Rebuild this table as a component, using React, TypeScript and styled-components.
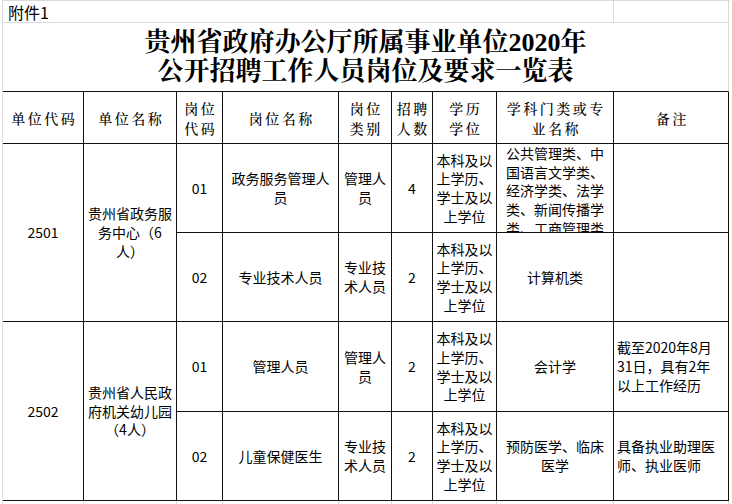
import React from 'react';
import styled, { createGlobalStyle } from 'styled-components';

const GRID = '#dadada';
const INK = '#111';

const GlobalStyle = createGlobalStyle`
  html, body {
    margin: 0;
    padding: 0;
    background: #fff;
  }
  body {
    font-family: "Noto Sans CJK SC", "Noto Sans", sans-serif;
    color: #000;
  }
`;

const Sheet = styled.div`
  margin-left: 2px;
  width: 727px;
  display: grid;
  grid-template-columns: 81px 93px 46px 116px 53px 41px 64px 117px 115px;
  grid-template-rows: 22px 69px 52px 89px 89px 90px 89px 8px;
  border-top: 1px solid ${GRID};
  border-left: 1px solid ${GRID};
  overflow: hidden;
`;

type Place = {
  $col: number;
  $row: number;
  $span?: number;
  $rows?: number;
  $edge?: string;
  $floor?: string;
};

const Cell = styled.div<Place>`
  grid-column: ${(p) => p.$col} / span ${(p) => p.$span ?? 1};
  grid-row: ${(p) => p.$row} / span ${(p) => p.$rows ?? 1};
  box-sizing: border-box;
  border-right: 1px solid ${(p) => p.$edge ?? INK};
  border-bottom: 1px solid ${(p) => p.$floor ?? INK};
  display: flex;
  align-items: center;
  justify-content: center;
  text-align: center;
  white-space: pre-line;
  overflow: hidden;
  min-width: 0;
`;

const Caption = styled(Cell)`
  justify-content: flex-start;
  padding-left: 5px;
  font-size: 16px;
  line-height: 20px;
`;

const TitleCell = styled(Cell)`
  flex-direction: column;
  font-family: "Liberation Serif", "Noto Serif CJK SC", "Noto Sans CJK SC", serif;
  font-weight: 700;
  font-size: 26px;
  line-height: 29px;
  padding-bottom: 1px;
`;

const TitleLine = styled.div`
  white-space: nowrap;
`;

const HeadCell = styled(Cell)`
  font-family: "Noto Serif CJK SC", "Noto Sans CJK SC", serif;
  font-size: 14px;
  font-weight: 500;
  line-height: 20px;
  letter-spacing: 2.5px;
  padding-left: 2.5px;
`;

const BodyCell = styled(Cell)`
  font-size: 14px;
  line-height: 18.7px;
  padding: 0 2px;
`;

const SubjectCell = styled(BodyCell)`
  align-items: flex-start;
`;

const NoteCell = styled(BodyCell)`
  justify-content: flex-start;
  text-align: left;
  padding: 0 3px;
`;

const Filler = styled(Cell)`
  border-bottom: none;
`;

const headers = [
  '单位代码',
  '单位名称',
  '岗位\n代码',
  '岗位名称',
  '岗位\n类别',
  '招聘\n人数',
  '学历\n学位',
  '学科门类或专\n业名称',
  '备注',
];

const degree = '本科及以\n上学历、\n学士及以\n上学位';

type Post = {
  code: string;
  name: string;
  kind: string;
  count: string;
  subject: string;
  clipTop?: boolean;
  note?: string;
};

type Unit = {
  code: string;
  name: string;
  posts: Post[];
};

const units: Unit[] = [
  {
    code: '2501',
    name: '贵州省政务服\n务中心（6\n人）',
    posts: [
      {
        code: '01',
        name: '政务服务管理人\n员',
        kind: '管理人\n员',
        count: '4',
        subject: '公共管理类、中\n国语言文学类、\n经济学类、法学\n类、新闻传播学\n类、工商管理类',
        clipTop: true,
      },
      {
        code: '02',
        name: '专业技术人员',
        kind: '专业技\n术人员',
        count: '2',
        subject: '计算机类',
      },
    ],
  },
  {
    code: '2502',
    name: '贵州省人民政\n府机关幼儿园\n（4人）',
    posts: [
      {
        code: '01',
        name: '管理人员',
        kind: '管理人\n员',
        count: '2',
        subject: '会计学',
        note: '截至2020年8月\n31日，具有2年\n以上工作经历',
      },
      {
        code: '02',
        name: '儿童保健医生',
        kind: '专业技\n术人员',
        count: '2',
        subject: '预防医学、临床\n医学',
        note: '具备执业助理医\n师、执业医师',
      },
    ],
  },
];

const App: React.FC = () => {
  let row = 4;

  return (
    <>
      <GlobalStyle />
      <Sheet>
        <Caption $col={1} $row={1} $span={8} $edge={GRID} $floor={GRID}>
          附件1
        </Caption>
        <Cell $col={9} $row={1} $edge={GRID} $floor={GRID} />

        <TitleCell $col={1} $row={2} $span={9} $edge={GRID}>
          <TitleLine>贵州省政府办公厅所属事业单位2020年</TitleLine>
          <TitleLine>公开招聘工作人员岗位及要求一览表</TitleLine>
        </TitleCell>

        {headers.map((h, i) => (
          <HeadCell key={h} $col={i + 1} $row={3}>
            {h}
          </HeadCell>
        ))}

        {units.map((unit) => {
          const start = row;
          row += unit.posts.length;
          return (
            <React.Fragment key={unit.code}>
              <BodyCell $col={1} $row={start} $rows={unit.posts.length}>
                {unit.code}
              </BodyCell>
              <BodyCell $col={2} $row={start} $rows={unit.posts.length}>
                {unit.name}
              </BodyCell>
              {unit.posts.map((post, i) => {
                const r = start + i;
                const Subject = post.clipTop ? SubjectCell : BodyCell;
                return (
                  <React.Fragment key={post.code}>
                    <BodyCell $col={3} $row={r}>{post.code}</BodyCell>
                    <BodyCell $col={4} $row={r}>{post.name}</BodyCell>
                    <BodyCell $col={5} $row={r}>{post.kind}</BodyCell>
                    <BodyCell $col={6} $row={r}>{post.count}</BodyCell>
                    <BodyCell $col={7} $row={r}>{degree}</BodyCell>
                    <Subject $col={8} $row={r}>{post.subject}</Subject>
                    <NoteCell $col={9} $row={r}>{post.note ?? ''}</NoteCell>
                  </React.Fragment>
                );
              })}
            </React.Fragment>
          );
        })}

        {headers.map((h, i) => (
          <Filler key={`f-${h}`} $col={i + 1} $row={8} $edge={GRID} />
        ))}
      </Sheet>
    </>
  );
};

export default App;
